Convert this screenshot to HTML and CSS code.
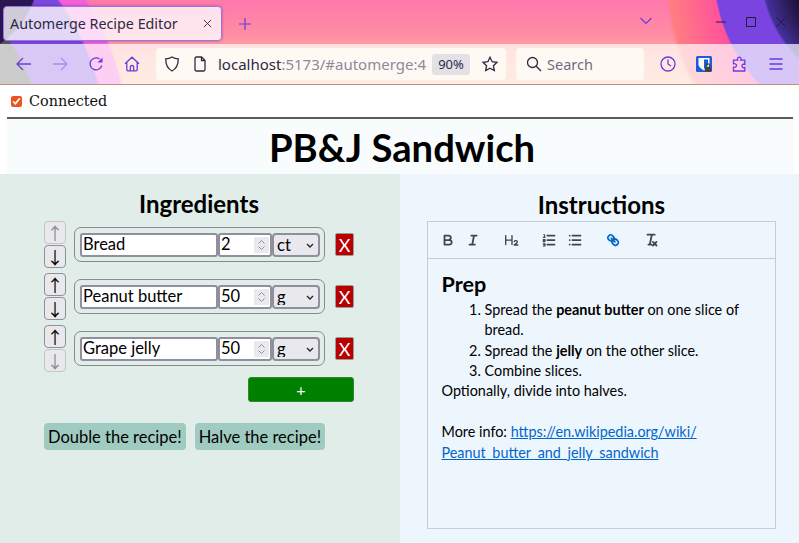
FILE: index.html
```html
<!DOCTYPE html>
<html lang="en">
<head>
    <meta charset="UTF-8">
    <meta name="viewport" content="width=device-width, initial-scale=1.0">
    <title>Automerge Recipe Editor</title>
    <link rel="stylesheet" href="styles.css">
</head>
<body>

<header class="browser">
    <div class="tabbar">
        <div class="tab">
            <span class="tab-title">Automerge Recipe Editor</span>
            <svg class="tab-close" viewBox="0 0 10 10"><path d="M1 1l8 8M9 1l-8 8"/></svg>
        </div>
        <svg class="new-tab" viewBox="0 0 12 12"><path d="M6 0v12M0 6h12"/></svg>
        <svg class="tab-list" viewBox="0 0 12 8"><path d="M0.5 1l5.5 5.5 5.5-5.5"/></svg>
        <div class="window-buttons">
            <svg viewBox="0 0 12 12"><path d="M1 6h10"/></svg>
            <svg viewBox="0 0 12 12"><path d="M1.5 1.5h9v9h-9z"/></svg>
            <svg viewBox="0 0 12 12"><path d="M1 1l10 10M11 1l-10 10"/></svg>
        </div>
    </div>
    <div class="toolbar">
        <div class="tool"><svg viewBox="0 0 16 16"><path d="M15 8H1M7 2L1 8l6 6"/></svg></div>
        <div class="tool tool-off"><svg viewBox="0 0 16 16"><path d="M1 8h14M9 2l6 6-6 6"/></svg></div>
        <div class="tool"><svg viewBox="0 0 16 16"><path d="M13.800 9.500A6 6 0 1 1 11.500 3"/><path class="tool-fill" d="M14.500 1.500v5h-5z"/></svg></div>
        <div class="tool"><svg viewBox="0 0 16 16"><path d="M1 7.800L8 1.200l7 6.600M2.800 6.500v7.200c0 .7.400 1.100 1.100 1.100h8.200c.7 0 1.100-.4 1.100-1.100V6.500M6.300 14.800v-3.600c0-1 .7-1.700 1.700-1.700s1.700.7 1.700 1.700v3.600"/></svg></div>
        <div class="urlbar">
            <svg class="url-icon" viewBox="0 0 16 16"><path d="M8 1c2 1.300 4 1.800 6.300 1.800 0 6-2 10-6.300 12.200C3.700 12.800 1.700 8.800 1.700 2.800 4 2.800 6 2.300 8 1z"/></svg>
            <svg class="url-icon page-icon" viewBox="0 0 16 16"><path d="M3 2.500c0-.8.500-1.500 1.500-1.500H9.500L13 4.500v9c0 1-.5 1.500-1.500 1.500h-7C3.500 15 3 14.500 3 13.500z"/><path d="M9.500 1v3.500H13"/></svg>
            <span class="url-text"><b>localhost</b>:5173/#automerge:4</span>
            <span class="zoom-pill">90%</span>
            <svg class="url-icon" viewBox="0 0 16 16"><path d="M8 1.200l2.100 4.500 4.900.6-3.600 3.400.9 4.900L8 12.200l-4.300 2.400.9-4.900L1 6.300l4.900-.6z"/></svg>
        </div>
        <div class="searchbar">
            <svg class="url-icon" viewBox="0 0 16 16"><circle cx="6.500" cy="6.500" r="5"/><path d="M10.200 10.200L15 15"/></svg>
            <span>Search</span>
        </div>
        <div class="tool tool-first"><svg viewBox="0 0 16 16"><circle cx="8" cy="8" r="7"/><path d="M8 3.500V8l3 2"/></svg></div>
        <div class="tool">
            <svg class="vault" viewBox="0 0 16 16">
                <rect width="16" height="16" rx="1.500" fill="#175ddc"/>
                <path d="M2.500 2h11v6.500c0 2.500-2.700 4.300-5.500 6-2.800-1.700-5.500-3.500-5.500-6z" fill="#fff"/>
                <path d="M8 3.500h4v5c0 1.500-2 3-4 4.200z" fill="#175ddc"/>
                <rect x="8.800" y="10.800" width="6.400" height="5" rx="1" fill="#444"/>
                <path d="M10.200 10.800V9.700a1.800 1.800 0 0 1 3.600 0v1.100" fill="none" stroke="#444" stroke-width="1.100"/>
            </svg>
        </div>
        <div class="tool"><svg viewBox="0 0 16 16"><path d="M6 1.500c1.200-.8 3-.2 3 1.300 0 .5-.1 1-.3 1.400h4.100v4.200c-1.300-.4-2.800 0-2.800 1.600s1.500 2 2.800 1.600V15H1.500v-3.800c1.500.3 3-.3 3-1.700S3 7.500 1.500 7.800V4.200h4.300C5.400 3.300 5.200 2.100 6 1.500z"/></svg></div>
        <div class="tool"><svg viewBox="0 0 16 16"><path d="M1.500 3h13M1.500 8h13M1.500 13h13"/></svg></div>
    </div>
</header>

<div class="page">
    <div class="status">
        <input class="status-check" type="checkbox" checked>
        <span>Connected</span>
    </div>
    <div class="rule"></div>
    <h1 class="title">PB&amp;J Sandwich</h1>
</div>

<main class="columns">
    <section class="ingredients">
        <h2>Ingredients</h2>

        <div class="ingredient">
            <div class="arrows">
                <button class="arrow" disabled>↑</button>
                <button class="arrow">↓</button>
            </div>
            <div class="fields">
                <input class="name" type="text" value="Bread">
                <div class="amount">
                    <input type="text" value="2">
                    <svg class="spin" viewBox="0 0 15 15"><path d="M4.500 6l3-3 3 3M4.500 9l3 3 3-3"/></svg>
                </div>
                <div class="unit">
                    <select><option>ct</option></select>
                    <svg class="chevron" viewBox="0 0 8 5"><path d="M1 1l3 3 3-3"/></svg>
                </div>
            </div>
            <button class="remove">X</button>
        </div>

        <div class="ingredient">
            <div class="arrows">
                <button class="arrow">↑</button>
                <button class="arrow">↓</button>
            </div>
            <div class="fields">
                <input class="name" type="text" value="Peanut butter">
                <div class="amount">
                    <input type="text" value="50">
                    <svg class="spin" viewBox="0 0 15 15"><path d="M4.500 6l3-3 3 3M4.500 9l3 3 3-3"/></svg>
                </div>
                <div class="unit">
                    <select><option>g</option></select>
                    <svg class="chevron" viewBox="0 0 8 5"><path d="M1 1l3 3 3-3"/></svg>
                </div>
            </div>
            <button class="remove">X</button>
        </div>

        <div class="ingredient">
            <div class="arrows">
                <button class="arrow">↑</button>
                <button class="arrow" disabled>↓</button>
            </div>
            <div class="fields">
                <input class="name" type="text" value="Grape jelly">
                <div class="amount">
                    <input type="text" value="50">
                    <svg class="spin" viewBox="0 0 15 15"><path d="M4.500 6l3-3 3 3M4.500 9l3 3 3-3"/></svg>
                </div>
                <div class="unit">
                    <select><option>g</option></select>
                    <svg class="chevron" viewBox="0 0 8 5"><path d="M1 1l3 3 3-3"/></svg>
                </div>
            </div>
            <button class="remove">X</button>
        </div>

        <button class="add">+</button>

        <div class="scale-buttons">
            <button class="scale">Double the recipe!</button>
            <button class="scale">Halve the recipe!</button>
        </div>
    </section>

    <section class="instructions">
        <h2>Instructions</h2>
        <div class="editor">
            <div class="editor-toolbar">
                <span class="format">
                    <button class="fmt"><svg viewBox="0 0 18 18"><path d="M5 4h4.500A2.500 2.500 0 0 1 12 6.500 2.500 2.500 0 0 1 9.500 9H5zM5 9h5.500A2.500 2.500 0 0 1 13 11.500 2.500 2.500 0 0 1 10.500 14H5z"/></svg></button>
                    <button class="fmt"><svg viewBox="0 0 18 18"><path d="M7 4h6M5 14h6M10 4l-2 10"/></svg></button>
                </span>
                <span class="format">
                    <button class="fmt"><svg viewBox="0 0 18 18"><path d="M3 4v10M10 4v10M3 9h7M12.500 10.500c.6-1.200 3.500-1.200 3.500.6 0 1.300-2.700 2-3.500 3.400H16.500" stroke-width="1.500"/></svg></button>
                </span>
                <span class="format">
                    <button class="fmt"><svg viewBox="0 0 18 18"><path d="M3 3h1v3M2.500 6H4.500M2.500 8.500h2v1.200h-2v1.200h2M2.500 13h2v2.500h-2M3 14.200h1.500" stroke-width="1.200"/><path d="M7 4h8M7 9h8M7 14h8"/></svg></button>
                    <button class="fmt"><svg viewBox="0 0 18 18"><path d="M6 4h9M6 9h9M6 14h9M3 4h.01M3 9h.01M3 14h.01"/></svg></button>
                </span>
                <span class="format">
                    <button class="fmt fmt-active"><svg viewBox="0 0 18 18"><path d="M7 7l4 4"/><path d="M8.900 4.577a3.476 3.476 0 0 1 .36 4.679A3.476 3.476 0 0 1 4.577 8.900C3.185 7.500 2.035 6.400 4.217 4.217S7.500 3.185 8.900 4.577z"/><path d="M13.423 9.100a3.476 3.476 0 0 0-4.679-.36 3.476 3.476 0 0 0 .36 4.679c1.392 1.392 2.500 2.542 4.679.36S14.815 10.500 13.423 9.100z"/></svg></button>
                </span>
                <span class="format">
                    <button class="fmt"><svg viewBox="0 0 18 18"><path d="M5 3h8M6 14h3.400M11 11l4 4M15 11l-4 4M9.800 3L7.500 14"/></svg></button>
                </span>
            </div>
            <div class="editor-body">
                <h3>Prep</h3>
                <ol>
                    <li>Spread the <strong>peanut butter</strong> on one slice of bread.</li>
                    <li>Spread the <strong>jelly</strong> on the other slice.</li>
                    <li>Combine slices.</li>
                </ol>
                <p>Optionally, divide into halves.</p>
                <p><br></p>
                <p>More info: <a href="#">https://en.wikipedia.org/wiki/<br>Peanut_butter_and_jelly_sandwich</a></p>
            </div>
        </div>
    </section>
</main>

</body>
</html>
```

FILE: styles.css
```css
* {
    box-sizing: border-box;
}
html, body {
    height: 100%;
}
body {
    margin: 0;
    height: 543px;
    overflow: hidden;
    display: flex;
    flex-direction: column;
    font-family: "Liberation Serif", serif;
    background: #fff;
}

/* browser window */
.browser {
    height: 85px;
    flex: none;
    font-family: "Noto Sans", sans-serif;
    background:
        radial-gradient(circle 90px at -50px -30px, #2a1650 98%, transparent 100%),
        radial-gradient(circle 194px at -150px 150px, #555 99%, transparent 100%),
        radial-gradient(circle 258px at -150px 150px, #7a48dc 99%, transparent 100%),
        radial-gradient(circle 281px at -150px 150px, #f45fd8 99%, transparent 100%),
        radial-gradient(circle 125px at 885px -30px, #1e1238 75%, #43309a 98%, transparent 100%),
        radial-gradient(circle 167px at 880px -30px, #7a44e0 99%, transparent 100%),
        radial-gradient(circle 220px at 885px -20px, #ff4f9e 75%, #ff7d80 98%, transparent 100%),
        linear-gradient(180deg, #ff78ac 0%, #ff8ca4 40%, #ffb09c 70%, #ffbe9e 100%);
}
.tabbar {
    height: 44px;
    display: flex;
    align-items: center;
    padding: 0 0 0 3px;
}
.tab {
    width: 219px;
    height: 35px;
    margin-top: 3px;
    padding: 0 9px 0 6px;
    display: flex;
    align-items: center;
    justify-content: space-between;
    background: rgba(255, 255, 255, 0.78);
    border: 1px solid #9a72f0;
    border-radius: 4px;
    box-shadow: 0 0 3px rgba(60, 20, 90, 0.4);
    font-size: 14.300px;
    color: #2b2a45;
}
.tab-close {
    width: 9px;
    height: 9px;
    fill: none;
    stroke: #2b2a45;
    stroke-width: 1;
}
.new-tab {
    width: 12px;
    height: 12px;
    margin: 3px 0 0 17px;
    fill: none;
    stroke: #6a3be0;
    stroke-width: 1.200;
}
.tab-list {
    width: 12px;
    height: 8px;
    margin: 0 0 2px 389px;
    fill: none;
    stroke: #6a3be0;
    stroke-width: 1.200;
}
.window-buttons {
    display: flex;
    gap: 18px;
    margin-left: 63px;
}
.window-buttons svg {
    width: 12px;
    height: 12px;
    fill: none;
    stroke: #241a3e;
    stroke-width: 1;
}
.toolbar {
    height: 41px;
    display: flex;
    align-items: center;
    padding: 0 5px 0 6px;
    background: rgba(255, 255, 255, 0.7);
    border-bottom: 1px solid #bd8f7d;
}
.tool {
    width: 36px;
    height: 32px;
    display: flex;
    align-items: center;
    justify-content: center;
}
.tool svg {
    width: 16px;
    height: 16px;
    fill: none;
    stroke: #6a3be0;
    stroke-width: 1.300;
}
.tool svg .tool-fill {
    fill: #6a3be0;
    stroke: none;
}
.tool-off svg {
    opacity: 0.4;
}
.tool-first {
    margin-left: 6px;
}
.tool svg.vault {
    stroke: none;
}
.urlbar {
    width: 350px;
    height: 32px;
    margin-left: 6px;
    padding: 0 8px 0 8px;
    display: flex;
    align-items: center;
    background: #fff9f4;
    border-radius: 4px;
    overflow: hidden;
}
.url-icon {
    width: 16px;
    height: 16px;
    flex: none;
    fill: none;
    stroke: #2f2a48;
    stroke-width: 1.300;
}
.page-icon {
    margin-left: 12px;
}
.url-text {
    width: 214px;
    margin-left: 10px;
    flex: none;
    overflow: hidden;
    white-space: nowrap;
    font-size: 15px;
    color: #8d8a9c;
}
.url-text b {
    font-weight: 400;
    color: #2b2a45;
}
.zoom-pill {
    width: 38px;
    height: 21px;
    flex: none;
    background: #e3e0e6;
    border-radius: 3px;
    text-align: center;
    font-size: 13px;
    line-height: 21px;
    color: #2b2a45;
}
.urlbar .zoom-pill + .url-icon {
    margin-left: 12px;
}
.searchbar {
    width: 128px;
    height: 32px;
    margin-left: 10px;
    padding-left: 10px;
    display: flex;
    align-items: center;
    gap: 5px;
    background: #fff9f4;
    border-radius: 4px;
    font-size: 14.500px;
    color: #6f6c80;
}

/* page header */
.page {
    flex: none;
    padding: 0 6px 0 7px;
}
.status {
    height: 32px;
    display: flex;
    align-items: center;
    font-family: "DejaVu Serif", serif;
    font-size: 14.400px;
    color: #111;
}
.status-check {
    width: 11px;
    height: 11px;
    margin: 0 7px 0 4px;
    accent-color: #e95420;
}
.rule {
    height: 2px;
    background: #5c5c5c;
}
.title {
    height: 55px;
    margin: 0;
    padding-left: 4px;
    background: #f8fcfd;
    text-align: center;
    font-family: Lato, sans-serif;
    font-size: 38.200px;
    line-height: 56px;
    font-weight: 700;
    color: #000;
}

/* two columns */
.columns {
    flex: 1;
    display: grid;
    grid-template-columns: 400px 399px;
    font-family: Lato, sans-serif;
    color: #000;
}
.ingredients {
    padding: 14px 46px 0 44px;
    background: #e1ede8;
}
.instructions {
    padding: 15px 23px 14px 27px;
    background: #eef6fd;
    display: flex;
    flex-direction: column;
}
h2 {
    margin: 0;
    height: 33px;
    text-align: center;
    font-size: 24px;
    line-height: 31px;
    font-weight: 700;
}
.instructions h2 {
    height: 32px;
}

/* ingredient rows */
.ingredient {
    display: flex;
    align-items: center;
    margin-bottom: 5px;
}
.arrows {
    width: 22px;
    display: flex;
    flex-direction: column;
    gap: 1px;
}
.arrow {
    width: 22px;
    height: 23px;
    padding: 0;
    background: #e9e9ed;
    border: 1.500px solid #8f8f9d;
    border-radius: 4px;
    font-family: "Noto Sans CJK JP", sans-serif;
    font-size: 17px;
    line-height: 18px;
    color: #000;
}
.arrow:disabled {
    border-color: #c3c5c8;
    color: #8d8d8d;
}
.fields {
    width: 251px;
    height: 35px;
    margin-left: 8px;
    padding: 0 5px;
    display: flex;
    align-items: center;
    border: 1.500px solid #8a8a8a;
    border-radius: 7px;
}
.fields input, .fields select {
    height: 24px;
    margin: 0;
    padding: 0 1px 2px;
    font-family: Lato, sans-serif;
    font-size: 16.500px;
    color: #000;
    border: 2px solid #8f8f9d;
    outline: none;
}
.name {
    width: 138px;
    flex: none;
    background: #fff;
    border-radius: 3px;
}
.amount {
    width: 54px;
    flex: none;
    position: relative;
}
.amount input {
    width: 100%;
    background: #fff;
    border-radius: 3px;
}
.spin {
    position: absolute;
    top: 4px;
    right: 3px;
    width: 15px;
    height: 16px;
    background: #e9e9ee;
    fill: none;
    stroke: #8f8f9d;
    stroke-width: 1;
}
.unit {
    width: 48px;
    flex: none;
    position: relative;
}
.unit select {
    width: 100%;
    padding-left: 3px;
    appearance: none;
    background: #e9e9ed;
    border-radius: 4px;
}
.chevron {
    position: absolute;
    top: 10px;
    right: 6px;
    width: 8px;
    height: 5px;
    fill: none;
    stroke: #222;
    stroke-width: 1.300;
}
.remove {
    width: 19px;
    height: 23px;
    margin-left: 10px;
    padding: 0;
    background: #b80000;
    border: 1px solid #9a9a9a;
    border-radius: 2px;
    font-family: Lato, sans-serif;
    font-size: 18px;
    line-height: 20px;
    color: #fff;
}
.add {
    display: block;
    width: 106px;
    height: 25px;
    margin: 0 0 0 204px;
    padding: 0;
    background: #008000;
    border: 1px solid #2a8a2a;
    border-radius: 3px;
    font-family: Lato, sans-serif;
    font-size: 16px;
    color: #fff;
}
.scale-buttons {
    display: flex;
    gap: 9px;
    margin-top: 21px;
}
.scale {
    height: 27px;
    padding: 0 4px;
    background: #a0cbc0;
    border: none;
    border-radius: 4px;
    font-family: Lato, sans-serif;
    font-size: 16.500px;
    color: #000;
}

/* editor */
.editor {
    width: 349px;
    height: 308px;
    display: flex;
    flex-direction: column;
    border: 1px solid #c6ccd2;
}
.editor-toolbar {
    height: 37px;
    flex: none;
    padding: 7px;
    display: flex;
    border-bottom: 1px solid #c6ccd2;
}
.format {
    display: flex;
    margin-right: 13.200px;
}
.fmt {
    width: 25.200px;
    height: 21.600px;
    padding: 2.700px 4.500px;
    background: none;
    border: none;
}
.fmt svg {
    display: block;
    width: 16.200px;
    height: 16.200px;
    fill: none;
    stroke: #444;
    stroke-width: 2;
    stroke-linecap: round;
    stroke-linejoin: round;
}
.fmt-active svg {
    stroke: #0066cc;
}
.editor-body {
    padding: 10px 13.500px;
    font-size: 14.400px;
    line-height: 20.450px;
    color: #000;
}
.editor-body h3 {
    margin: 0;
    font-size: 21.600px;
    line-height: 30.600px;
    font-weight: 700;
}
.editor-body ol {
    margin: 0;
    padding-left: 43px;
}
.editor-body p {
    margin: 0;
}
.editor-body a {
    color: #0066cc;
}
```
